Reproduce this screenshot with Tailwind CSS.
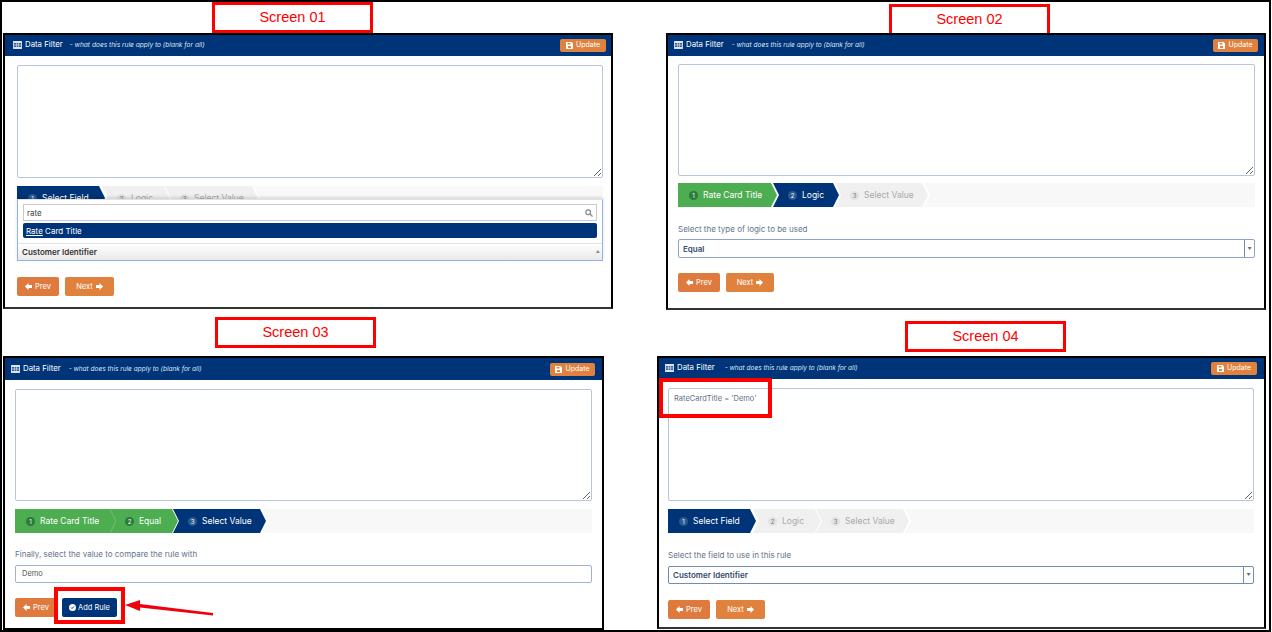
<!DOCTYPE html>
<html lang="en">
<head>
<meta charset="UTF-8">
<title>Data Filter screens</title>
<script src="https://cdn.jsdelivr.net/npm/@tailwindcss/browser@4"></script>
</head>
<body class="bg-white font-['Inter','Liberation_Sans',sans-serif]">
<div class="relative w-[1271px] h-[632px] overflow-hidden border-2 border-black box-border">

  <!-- Screen 01 -->
  <div class="absolute left-[210px] top-0 w-[161px] h-[31px] border-[3px] border-[#ff0000] flex items-center justify-center text-[14.5px] text-[#ff0000] font-['Liberation_Sans',sans-serif]">Screen 01</div>
  <div class="absolute left-[1px] top-[31px] w-[610px] h-[276px] border-2 border-black border-b-[#333] bg-white flex flex-col">
    <div class="h-[21px] bg-[#003478] flex items-center justify-between pl-[8px] pr-[5px] shrink-0">
      <div class="flex items-center gap-[3px] text-white">
        <svg width="9" height="8" viewBox="0 0 10 9" fill="#dbe4f0"><path d="M0 0h10v9H0zM1 2.500v1.500h2.300V2.500zM4 2.500v1.500h2V2.500zM6.700 2.500v1.500H9V2.500zM1 5v1.500h2.300V5zM4 5v1.500h2V5zM6.700 5v1.500H9V5z" fill-rule="evenodd"/></svg>
        <span class="text-[7.800px] leading-none mb-[1px]">Data Filter</span>
        <span class="text-[6.600px] italic leading-none text-[#dbe4f0] ml-[4px]">- what does this rule apply to (blank for all)</span>
      </div>
      <div class="h-[13px] w-[46px] rounded-[2px] bg-[#e0823d] flex items-center justify-center gap-[3px] text-[7px] text-white">
        <svg width="7" height="7" viewBox="0 0 7 7" fill="#fff"><path d="M0 0h5.500L7 1.500V7H0zM1.500 1v1.500h3V1zM2 4v2h3V4z" fill-rule="evenodd"/></svg>Update
      </div>
    </div>
    <div class="flex flex-col pl-[12px] pr-[8px] pt-[9px]">
      <textarea class="block w-full h-[113px] border border-[#b9c6da] rounded-[2px] bg-white"></textarea>
      <div class="relative mt-[8px] h-[67px]">
        <div class="flex h-[13px] bg-white overflow-hidden text-[8.500px]">
          <div class="w-[88px] h-[24px] shrink-0 bg-[#003478] text-white flex items-center gap-[5px] pl-[11px] [clip-path:polygon(0_0,calc(100%-6px)_0,100%_50%,calc(100%-6px)_100%,0_100%)]">
            <span class="w-[9px] h-[9px] rounded-full bg-[#2a5a90] text-[6px] flex items-center justify-center">1</span>Select Field</div>
          <div class="w-[68px] h-[24px] shrink-0 -ml-[3px] bg-[#f0f0f0] text-[#aaa] flex items-center gap-[5px] pl-[15px] [clip-path:polygon(0_0,calc(100%-6px)_0,100%_50%,calc(100%-6px)_100%,0_100%,6px_50%)]">
            <span class="w-[9px] h-[9px] rounded-full bg-[#e2e2e2] text-[#777] text-[6px] flex items-center justify-center">2</span>Logic</div>
          <div class="w-[93px] h-[24px] shrink-0 -ml-[5px] bg-[#f0f0f0] text-[#aaa] flex items-center gap-[5px] pl-[15px] [clip-path:polygon(0_0,calc(100%-6px)_0,100%_50%,calc(100%-6px)_100%,0_100%,6px_50%)]">
            <span class="w-[9px] h-[9px] rounded-full bg-[#e2e2e2] text-[#777] text-[6px] flex items-center justify-center">3</span>Select Value</div>
          <div class="flex-1 h-[24px] -ml-[4px] bg-[#f8f8f8] [clip-path:polygon(0_0,100%_0,100%_100%,0_100%,6px_50%)]"></div>
        </div>
        <div class="absolute left-0 right-0 top-[13px] h-[62px] bg-white border border-[#e2e2e2] border-b-[#8fb4e6] border-l-[#8fb4e6] border-r-[#8fb4e6] shadow-[0_-2px_3px_rgba(0,0,0,0.12)] flex flex-col">
          <div class="mx-[5px] mt-[4px] h-[17px] shrink-0 border border-[#c9c9c9] flex items-center justify-between pl-[3px] pr-[3px] text-[8px] text-[#444]">rate
            <svg width="8" height="8" viewBox="0 0 8 8" fill="none" stroke="#888" stroke-width="1.200"><circle cx="3.200" cy="3.200" r="2.400"/><path d="M5 5l2.500 2.500"/></svg>
          </div>
          <div class="mx-[5px] mt-[2px] h-[15px] shrink-0 rounded-[2px] bg-[#003478] text-white text-[8px] flex items-center pl-[3px]"><span class="underline">Rate</span>&nbsp;Card Title</div>
          <div class="mt-[5px] flex-1 border-t border-[#e2e2e2] bg-gradient-to-b from-white to-[#e9e9e9] flex items-center justify-between pl-[4px] pr-[2px] text-[8px] font-semibold text-[#333]">Customer Identifier
            <span class="text-[4px] text-[#888]">▲</span>
          </div>
        </div>
      </div>
      <div class="flex gap-[6px] mt-[24px]">
        <div class="w-[42px] h-[19px] rounded-[2px] bg-[#de7a3e] text-white text-[7.500px] flex items-center justify-center gap-[3px]"><svg width="7" height="7" viewBox="0 0 7 7" fill="#fff"><path d="M0 3.500L3.500 0v2H7v3H3.500v2z"/></svg>Prev</div>
        <div class="w-[49px] h-[19px] rounded-[2px] bg-[#e0823d] text-white text-[7.500px] flex items-center justify-center gap-[3px]">Next<svg width="7" height="7" viewBox="0 0 7 7" fill="#fff"><path d="M7 3.500L3.500 0v2H0v3h3.500v2z"/></svg></div>
      </div>
    </div>
  </div>

  <!-- Screen 02 -->
  <div class="absolute left-[887px] top-[2px] w-[161px] h-[32px] border-[3px] border-[#ff0000] flex items-center justify-center text-[14.5px] text-[#ff0000] font-['Liberation_Sans',sans-serif]">Screen 02</div>
  <div class="absolute left-[664px] top-[31px] w-[600px] h-[277px] border-2 border-black border-b-[#333] bg-white flex flex-col">
    <div class="h-[21px] bg-[#003478] flex items-center justify-between pl-[6px] pr-[6px] shrink-0">
      <div class="flex items-center gap-[3px] text-white">
        <svg width="9" height="8" viewBox="0 0 10 9" fill="#dbe4f0"><path d="M0 0h10v9H0zM1 2.500v1.500h2.300V2.500zM4 2.500v1.500h2V2.500zM6.700 2.500v1.500H9V2.500zM1 5v1.500h2.300V5zM4 5v1.500h2V5zM6.700 5v1.500H9V5z" fill-rule="evenodd"/></svg>
        <span class="text-[7.800px] leading-none mb-[1px]">Data Filter</span>
        <span class="text-[6.500px] italic leading-none text-[#dbe4f0] ml-[5px]">- what does this rule apply to (blank for all)</span>
      </div>
      <div class="h-[13px] w-[45px] rounded-[2px] bg-[#e0823d] flex items-center justify-center gap-[3px] text-[7px] text-white">
        <svg width="7" height="7" viewBox="0 0 7 7" fill="#fff"><path d="M0 0h5.500L7 1.500V7H0zM1.500 1v1.500h3V1zM2 4v2h3V4z" fill-rule="evenodd"/></svg>Update
      </div>
    </div>
    <div class="flex flex-col pl-[10px] pr-[9px] pt-[8px]">
      <textarea class="block w-full h-[112px] border border-[#b9c6da] rounded-[2px] bg-white"></textarea>
      <div class="flex h-[24px] mt-[7px] bg-white text-[8.500px]">
        <div class="w-[99px] shrink-0 bg-[#4cae50] text-white flex items-center gap-[5px] pl-[11px] [clip-path:polygon(0_0,calc(100%-6px)_0,100%_50%,calc(100%-6px)_100%,0_100%)]">
          <span class="w-[9px] h-[9px] rounded-full bg-[#2c7a3c] text-[6px] flex items-center justify-center">1</span>Rate Card Title</div>
        <div class="w-[66px] shrink-0 -ml-[4px] bg-[#003478] text-white flex items-center gap-[5px] pl-[15px] [clip-path:polygon(0_0,calc(100%-6px)_0,100%_50%,calc(100%-6px)_100%,0_100%,6px_50%)]">
          <span class="w-[9px] h-[9px] rounded-full bg-[#2a5a90] text-[6px] flex items-center justify-center">2</span>Logic</div>
        <div class="w-[93px] shrink-0 -ml-[4px] bg-[#f0f0f0] text-[#aaa] flex items-center gap-[5px] pl-[15px] [clip-path:polygon(0_0,calc(100%-6px)_0,100%_50%,calc(100%-6px)_100%,0_100%,6px_50%)]">
          <span class="w-[9px] h-[9px] rounded-full bg-[#e2e2e2] text-[#777] text-[6px] flex items-center justify-center">3</span>Select Value</div>
        <div class="flex-1 -ml-[4px] bg-[#f8f8f8] [clip-path:polygon(0_0,100%_0,100%_100%,0_100%,6px_50%)]"></div>
      </div>
      <div class="text-[8px] leading-none text-[#64748b] mt-[18px]">Select the type of logic to be used</div>
      <div class="h-[19px] mt-[6px] border border-[#8ea4c8] rounded-[2px] flex items-center justify-between pl-[4px] text-[8px] font-semibold text-[#33496a]">Equal
        <span class="w-[10px] h-full border-l border-[#6f8bb8] text-[4px] text-[#666] flex items-center justify-center">▼</span></div>
      <div class="flex gap-[6px] mt-[15px]">
        <div class="w-[42px] h-[19px] rounded-[2px] bg-[#de7a3e] text-white text-[7.500px] flex items-center justify-center gap-[3px]"><svg width="7" height="7" viewBox="0 0 7 7" fill="#fff"><path d="M0 3.500L3.500 0v2H7v3H3.500v2z"/></svg>Prev</div>
        <div class="w-[48px] h-[19px] rounded-[2px] bg-[#e0823d] text-white text-[7.500px] flex items-center justify-center gap-[3px]">Next<svg width="7" height="7" viewBox="0 0 7 7" fill="#fff"><path d="M7 3.500L3.500 0v2H0v3h3.500v2z"/></svg></div>
      </div>
    </div>
  </div>

  <!-- Screen 03 -->
  <div class="absolute left-[213px] top-[315px] w-[161px] h-[31px] border-[3px] border-[#ff0000] flex items-center justify-center text-[14.5px] text-[#ff0000] font-['Liberation_Sans',sans-serif]">Screen 03</div>
  <div class="absolute left-[1px] top-[354px] w-[601px] h-[274px] border-2 border-black bg-white flex flex-col">
    <div class="h-[22px] bg-[#003478] flex items-center justify-between pl-[6px] pr-[7px] shrink-0">
      <div class="flex items-center gap-[3px] text-white">
        <svg width="9" height="8" viewBox="0 0 10 9" fill="#dbe4f0"><path d="M0 0h10v9H0zM1 2.500v1.500h2.300V2.500zM4 2.500v1.500h2V2.500zM6.700 2.500v1.500H9V2.500zM1 5v1.500h2.300V5zM4 5v1.500h2V5zM6.700 5v1.500H9V5z" fill-rule="evenodd"/></svg>
        <span class="text-[7.800px] leading-none mb-[1px]">Data Filter</span>
        <span class="text-[6.500px] italic leading-none text-[#dbe4f0] ml-[5px]">- what does this rule apply to (blank for all)</span>
      </div>
      <div class="h-[13px] w-[45px] rounded-[2px] bg-[#e0823d] flex items-center justify-center gap-[3px] text-[7px] text-white">
        <svg width="7" height="7" viewBox="0 0 7 7" fill="#fff"><path d="M0 0h5.500L7 1.500V7H0zM1.500 1v1.500h3V1zM2 4v2h3V4z" fill-rule="evenodd"/></svg>Update
      </div>
    </div>
    <div class="flex flex-col pl-[10px] pr-[10px] pt-[9px]">
      <textarea class="block w-full h-[112px] border border-[#b9c6da] rounded-[2px] bg-white"></textarea>
      <div class="flex h-[24px] mt-[8px] bg-white text-[8.500px]">
        <div class="w-[101px] shrink-0 bg-[#4cae50] text-white flex items-center gap-[5px] pl-[11px] [clip-path:polygon(0_0,calc(100%-6px)_0,100%_50%,calc(100%-6px)_100%,0_100%)]">
          <span class="w-[9px] h-[9px] rounded-full bg-[#2c7a3c] text-[6px] flex items-center justify-center">1</span>Rate Card Title</div>
        <div class="w-[68px] shrink-0 -ml-[6px] bg-[#4cae50] text-white flex items-center gap-[5px] pl-[15px] [clip-path:polygon(0_0,calc(100%-6px)_0,100%_50%,calc(100%-6px)_100%,0_100%,6px_50%)]">
          <span class="w-[9px] h-[9px] rounded-full bg-[#2c7a3c] text-[6px] flex items-center justify-center">2</span>Equal</div>
        <div class="w-[93px] shrink-0 -ml-[5px] bg-[#003478] text-white flex items-center gap-[5px] pl-[15px] [clip-path:polygon(0_0,calc(100%-6px)_0,100%_50%,calc(100%-6px)_100%,0_100%,6px_50%)]">
          <span class="w-[9px] h-[9px] rounded-full bg-[#2a5a90] text-[6px] flex items-center justify-center">3</span>Select Value</div>
        <div class="flex-1 -ml-[4px] bg-[#f8f8f8] [clip-path:polygon(0_0,100%_0,100%_100%,0_100%,6px_50%)]"></div>
      </div>
      <div class="text-[8px] leading-none text-[#64748b] mt-[17px]">Finally, select the value to compare the rule with</div>
      <div class="h-[18px] mt-[7px] border border-[#9fb2d0] rounded-[2px] flex items-center pl-[6px] text-[7.500px] text-[#555]">Demo</div>
      <div class="flex gap-[5px] mt-[15px]">
        <div class="w-[42px] h-[19px] rounded-[2px] bg-[#de7a3e] text-white text-[7.500px] flex items-center justify-center gap-[3px]"><svg width="7" height="7" viewBox="0 0 7 7" fill="#fff"><path d="M0 3.500L3.500 0v2H7v3H3.500v2z"/></svg>Prev</div>
        <div class="w-[55px] h-[19px] rounded-[2px] bg-[#003478] text-white text-[7.500px] flex items-center justify-center gap-[2px]"><svg width="7" height="7" viewBox="0 0 7 7"><circle cx="3.500" cy="3.500" r="3.500" fill="#fff"/><path d="M2 3.500l1 1 2-2" stroke="#003478" fill="none"/></svg>Add Rule</div>
      </div>
    </div>
  </div>
  <!-- annotations on screen 03 -->
  <div class="absolute left-[52px] top-[585px] w-[71px] h-[37px] border-[4px] border-[#ff0000]"></div>
  <svg class="absolute left-[120px] top-[595px]" width="100" height="24" viewBox="0 0 100 24"><path d="M3 8L18 3V7L91 16V18.500L18 10.500V14z" fill="#f0000c"/></svg>

  <!-- Screen 04 -->
  <div class="absolute left-[903px] top-[319px] w-[161px] h-[31px] border-[3px] border-[#ff0000] flex items-center justify-center text-[14.5px] text-[#ff0000] font-['Liberation_Sans',sans-serif]">Screen 04</div>
  <div class="absolute left-[655px] top-[354px] w-[609px] h-[273px] border-2 border-black border-b-[#333] bg-white flex flex-col">
    <div class="h-[21px] bg-[#003478] flex items-center justify-between pl-[6px] pr-[7px] shrink-0">
      <div class="flex items-center gap-[3px] text-white">
        <svg width="9" height="8" viewBox="0 0 10 9" fill="#dbe4f0"><path d="M0 0h10v9H0zM1 2.500v1.500h2.300V2.500zM4 2.500v1.500h2V2.500zM6.700 2.500v1.500H9V2.500zM1 5v1.500h2.300V5zM4 5v1.500h2V5zM6.700 5v1.500H9V5z" fill-rule="evenodd"/></svg>
        <span class="text-[7.800px] leading-none mb-[1px]">Data Filter</span>
        <span class="text-[6.500px] italic leading-none text-[#dbe4f0] ml-[7px]">- what does this rule apply to (blank for all)</span>
      </div>
      <div class="h-[13px] w-[46px] rounded-[2px] bg-[#e0823d] flex items-center justify-center gap-[3px] text-[7px] text-white">
        <svg width="7" height="7" viewBox="0 0 7 7" fill="#fff"><path d="M0 0h5.500L7 1.500V7H0zM1.500 1v1.500h3V1zM2 4v2h3V4z" fill-rule="evenodd"/></svg>Update
      </div>
    </div>
    <div class="flex flex-col pl-[9px] pr-[10px] pt-[9px]">
      <textarea class="block w-full h-[113px] border border-[#b9c6da] rounded-[2px] bg-white pl-[5px] pt-[4px] text-[7.500px] text-[#5f6f8a]">RateCardTitle = 'Demo'</textarea>
      <div class="flex h-[24px] mt-[8px] bg-white text-[8.500px]">
        <div class="w-[88px] shrink-0 bg-[#003478] text-white flex items-center gap-[5px] pl-[11px] [clip-path:polygon(0_0,calc(100%-6px)_0,100%_50%,calc(100%-6px)_100%,0_100%)]">
          <span class="w-[9px] h-[9px] rounded-full bg-[#2a5a90] text-[6px] flex items-center justify-center">1</span>Select Field</div>
        <div class="w-[68px] shrink-0 -ml-[3px] bg-[#f0f0f0] text-[#aaa] flex items-center gap-[5px] pl-[15px] [clip-path:polygon(0_0,calc(100%-6px)_0,100%_50%,calc(100%-6px)_100%,0_100%,6px_50%)]">
          <span class="w-[9px] h-[9px] rounded-full bg-[#e2e2e2] text-[#777] text-[6px] flex items-center justify-center">2</span>Logic</div>
        <div class="w-[93px] shrink-0 -ml-[5px] bg-[#f0f0f0] text-[#aaa] flex items-center gap-[5px] pl-[15px] [clip-path:polygon(0_0,calc(100%-6px)_0,100%_50%,calc(100%-6px)_100%,0_100%,6px_50%)]">
          <span class="w-[9px] h-[9px] rounded-full bg-[#e2e2e2] text-[#777] text-[6px] flex items-center justify-center">3</span>Select Value</div>
        <div class="flex-1 -ml-[4px] bg-[#f8f8f8] [clip-path:polygon(0_0,100%_0,100%_100%,0_100%,6px_50%)]"></div>
      </div>
      <div class="text-[8px] leading-none text-[#64748b] mt-[18px]">Select the field to use in this rule</div>
      <div class="h-[18px] mt-[7px] border border-[#6f8bb8] rounded-[2px] flex items-center justify-between pl-[4px] text-[8px] font-semibold text-[#33496a]">Customer Identifier
        <span class="w-[10px] h-full border-l border-[#6f8bb8] text-[4px] text-[#666] flex items-center justify-center">▼</span></div>
      <div class="flex gap-[6px] mt-[16px]">
        <div class="w-[42px] h-[19px] rounded-[2px] bg-[#de7a3e] text-white text-[7.500px] flex items-center justify-center gap-[3px]"><svg width="7" height="7" viewBox="0 0 7 7" fill="#fff"><path d="M0 3.500L3.500 0v2H7v3H3.500v2z"/></svg>Prev</div>
        <div class="w-[49px] h-[19px] rounded-[2px] bg-[#e0823d] text-white text-[7.500px] flex items-center justify-center gap-[3px]">Next<svg width="7" height="7" viewBox="0 0 7 7" fill="#fff"><path d="M7 3.500L3.500 0v2H0v3h3.500v2z"/></svg></div>
      </div>
    </div>
  </div>
  <div class="absolute left-[657px] top-[376px] w-[113px] h-[40px] border-[4px] border-[#ff0000]"></div>
</div>
</body>
</html>
